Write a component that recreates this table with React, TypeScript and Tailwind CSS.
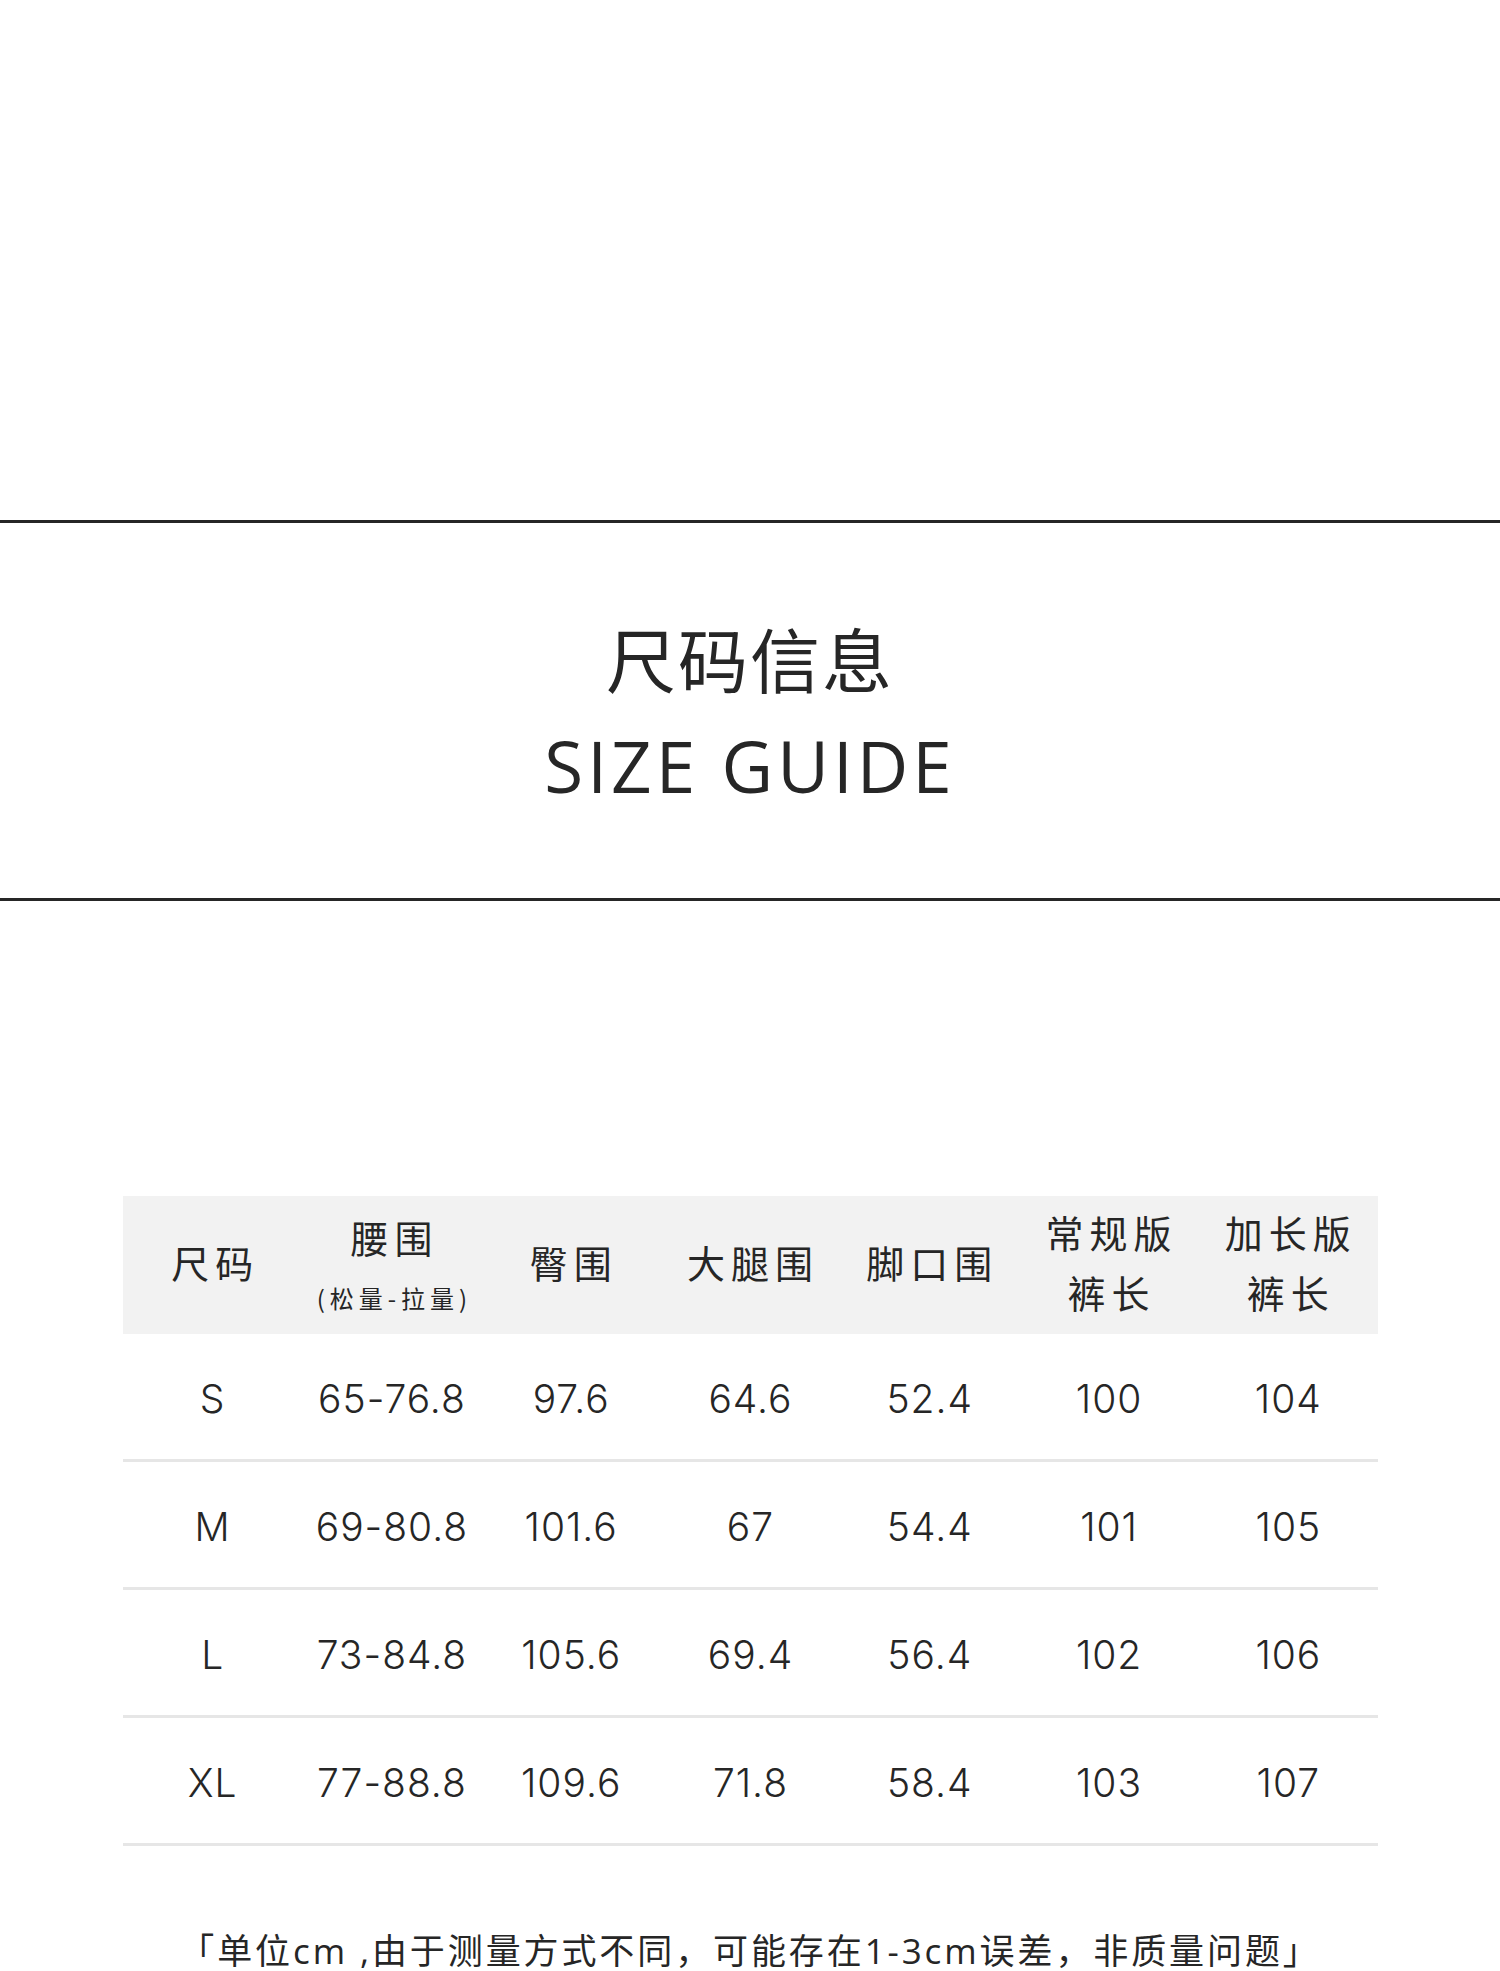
const CJK = "font-['Noto_Sans_CJK_SC',sans-serif]";

const rows = [
  ["S", "65-76.8", "97.6", "64.6", "52.4", "100", "104"],
  ["M", "69-80.8", "101.6", "67", "54.4", "101", "105"],
  ["L", "73-84.8", "105.6", "69.4", "56.4", "102", "106"],
  ["XL", "77-88.8", "109.6", "71.8", "58.4", "103", "107"],
];

function HeadCell({ children }: { children: React.ReactNode }) {
  return (
    <div className="flex flex-col items-center justify-center pb-[6px] pl-[6px] text-[38px] tracking-[6px] text-[#262626]">
      {children}
    </div>
  );
}

export default function App() {
  return (
    <div className="h-[1971px] w-[1500px] overflow-hidden bg-white">
      <div className="h-[520px]" />
      <div className="h-[3px] bg-[#262626]" />

      <section className="flex h-[375px] flex-col items-center pt-[100px] text-[#262626]">
        <h1 className={`${CJK} text-[70px] leading-[70px] tracking-[2px]`}>尺码信息</h1>
        <p className="mt-[37px] font-['Open_Sans',sans-serif] text-[71px] leading-[71px] tracking-[4px]">
          SIZE GUIDE
        </p>
      </section>

      <div className="h-[3px] bg-[#262626]" />

      <div className={`mx-auto mt-[295px] w-[1255px] ${CJK}`}>
        <div className="grid h-[138px] grid-cols-7 bg-[#f2f2f2]">
          <HeadCell>
            <span className="leading-[60px]">尺码</span>
          </HeadCell>
          <HeadCell>
            <span className="leading-[52px]">腰围</span>
            <span className="mt-[20px] text-[24px] leading-[30px] tracking-[5px]">(松量-拉量)</span>
          </HeadCell>
          <HeadCell>
            <span className="leading-[60px]">臀围</span>
          </HeadCell>
          <HeadCell>
            <span className="leading-[60px]">大腿围</span>
          </HeadCell>
          <HeadCell>
            <span className="leading-[60px]">脚口围</span>
          </HeadCell>
          <HeadCell>
            <span className="leading-[60px]">常规版</span>
            <span className="leading-[60px]">裤长</span>
          </HeadCell>
          <HeadCell>
            <span className="leading-[60px]">加长版</span>
            <span className="leading-[60px]">裤长</span>
          </HeadCell>
        </div>

        {rows.map((row) => (
          <div
            key={row[0]}
            className="grid h-[128px] grid-cols-7 items-center border-b-[3px] border-[#e6e6e6] pt-[4px] font-['Inter',sans-serif] text-[39px] font-light tracking-[1px] text-[#262626]"
          >
            {row.map((cell, i) => (
              <div key={i} className="pl-[1px] text-center leading-none">
                {cell}
              </div>
            ))}
          </div>
        ))}
      </div>

      <p className="mt-[87px] text-center font-['Open_Sans','Noto_Sans_CJK_SC',sans-serif] text-[35px] leading-[35px] tracking-[2.9px] text-[#262626]">
        「单位cm ,由于测量方式不同，可能存在1-3cm误差，非质量问题」
      </p>
    </div>
  );
}
